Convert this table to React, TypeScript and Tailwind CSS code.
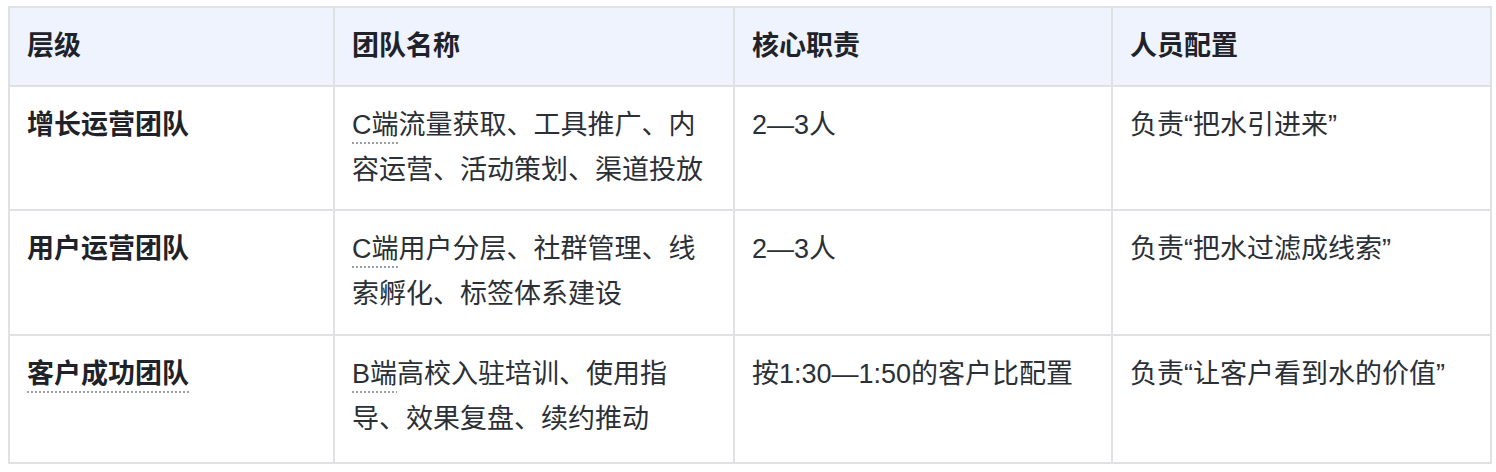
const rows = [
  {
    level: "增长运营团队",
    levelMark: false,
    prefix: "C端",
    name: "流量获取、工具推广、内容运营、活动策划、渠道投放",
    duty: "2—3人",
    staff: "负责“把水引进来”",
    pad: "pt-[16px] pb-[16px]",
  },
  {
    level: "用户运营团队",
    levelMark: false,
    prefix: "C端",
    name: "用户分层、社群管理、线索孵化、标签体系建设",
    duty: "2—3人",
    staff: "负责“把水过滤成线索”",
    pad: "pt-[16px] pb-[17px]",
  },
  {
    level: "客户成功团队",
    levelMark: true,
    prefix: "B端",
    name: "高校入驻培训、使用指导、效果复盘、续约推动",
    duty: "按1:30—1:50的客户比配置",
    staff: "负责“让客户看到水的价值”",
    pad: "pt-[16px] pb-[20px]",
  },
];

const dotted = "underline decoration-dotted decoration-[#9aa0a6] decoration-[1.5px] underline-offset-[8px]";
const cell = "border-2 border-[#dfe1e5] px-[17px] align-top";

export default function App() {
  return (
    <div className="min-h-screen bg-white pl-2 pt-[6px] font-['Liberation_Sans','Noto_Sans_CJK_SC',sans-serif]">
      <table className="w-[1482px] table-fixed border-collapse border-2 border-[#dfe1e5] text-[27px] leading-[45px]">
        <colgroup>
          <col className="w-[325px]" />
          <col className="w-[400px]" />
          <col className="w-[378px]" />
          <col className="w-[379px]" />
        </colgroup>
        <thead>
          <tr className="bg-[#eef3fd] text-left text-[#1f2329]">
            <th className={`${cell} py-[16px] font-semibold`}>层级</th>
            <th className={`${cell} py-[16px] font-semibold`}>团队名称</th>
            <th className={`${cell} py-[16px] font-semibold`}>核心职责</th>
            <th className={`${cell} py-[16px] font-semibold`}>人员配置</th>
          </tr>
        </thead>
        <tbody>
          {rows.map((row) => (
            <tr key={row.level} className="text-[#2b2f36]">
              <td className={`${cell} ${row.pad} font-semibold text-[#1f2329]`}>
                <span className={row.levelMark ? dotted : ""}>{row.level}</span>
              </td>
              <td className={`${cell} ${row.pad}`}>
                <span className={dotted}>{row.prefix}</span>
                {row.name}
              </td>
              <td className={`${cell} ${row.pad}`}>{row.duty}</td>
              <td className={`${cell} ${row.pad}`}>{row.staff}</td>
            </tr>
          ))}
        </tbody>
      </table>
    </div>
  );
}
